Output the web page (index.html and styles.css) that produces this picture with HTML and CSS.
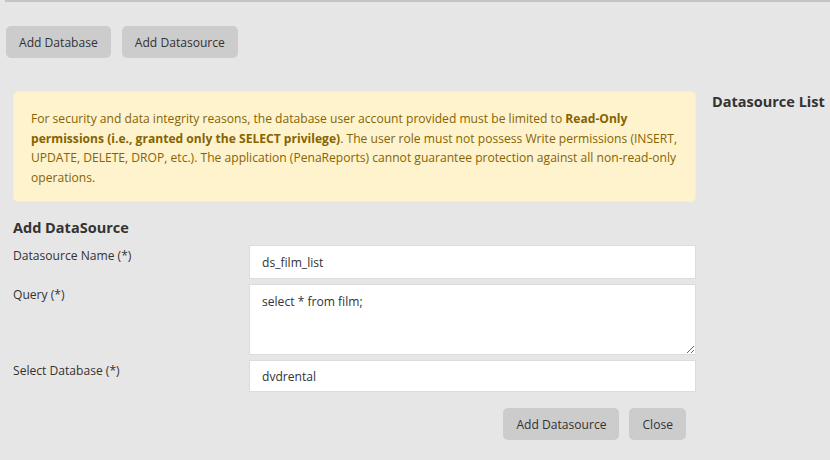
FILE: index.html
```html
<!DOCTYPE html>
<html>
<head>
<meta charset="utf-8">
<link rel="stylesheet" href="styles.css">
</head>
<body>
<div class="topbar"></div>
<div class="toolbar">
  <button class="btn">Add Database</button>
  <button class="btn">Add Datasource</button>
</div>
<div class="main">
  <div class="left">
    <div class="alert">For security and data integrity reasons, the database user account provided must be limited to <b>Read-Only permissions (i.e., granted only the SELECT privilege)</b>. The user role must not possess Write permissions (INSERT, UPDATE, DELETE, DROP, etc.). The application (PenaReports) cannot guarantee protection against all non-read-only operations.</div>
    <h3 class="title">Add DataSource</h3>
    <div class="form">
      <label class="lbl">Datasource Name (*)</label>
      <input class="field" type="text" value="ds_film_list">
      <label class="lbl">Query (*)</label>
      <textarea class="field area">select * from film;</textarea>
      <label class="lbl">Select Database (*)</label>
      <input class="field short" type="text" value="dvdrental">
    </div>
    <div class="actions">
      <button class="btn">Add Datasource</button>
      <button class="btn">Close</button>
    </div>
  </div>
  <div class="right">
    <h3 class="list-title">Datasource List</h3>
  </div>
</div>
</body>
</html>
```
FILE: styles.css
```css
* { box-sizing: border-box; }
html, body { margin: 0; padding: 0; }
body {
  background: #e6e6e6;
  font-family: "Open Sans", "Noto Sans", sans-serif;
  font-size: 12.1px;
  color: #333;
  width: 830px;
  height: 460px;
  overflow: hidden;
}
.topbar {
  height: 2px;
  margin-left: 5px;
  background: #c4c4c4;
}
.toolbar {
  display: flex;
  gap: 11px;
  padding: 24px 0 0 6px;
}
.btn {
  font-family: inherit;
  font-size: 12.1px;
  color: #333;
  background: #cccccc;
  border: none;
  border-radius: 5px;
  height: 32px;
  padding: 0 13px;
  cursor: pointer;
}
.main {
  display: flex;
  margin-top: 33px;
}
.left {
  width: 696px;
  padding-left: 13px;
}
.right {
  padding-left: 16px;
}
.alert {
  background: #fff3cd;
  border: 1px solid #ffeeba;
  border-radius: 5px;
  color: #856404;
  padding: 17px 17px 14px 17px;
  line-height: 19.6px;
}
.alert b { font-weight: 700; }
.title {
  margin: 16px 0 8px;
  font-size: 14.5px;
  font-weight: 700;
  color: #333;
}
.list-title {
  margin: 1px 0 0;
  font-size: 14.5px;
  font-weight: 700;
  color: #333;
}
.form {
  display: grid;
  grid-template-columns: 236px 1fr;
  row-gap: 5px;
}
.lbl {
  padding-top: 2px;
  line-height: 18px;
}
.field {
  font-family: inherit;
  font-size: 12.1px;
  color: #333;
  background: #fff;
  border: 1px solid #dcdcdc;
  height: 34px;
  padding: 0 12px;
  width: 100%;
  margin: 0;
}
.field.short { height: 32px; }
.area {
  height: 71px;
  padding: 8px 12px;
  resize: vertical;
  display: block;
}
.actions {
  display: flex;
  justify-content: flex-end;
  gap: 10px;
  padding: 16px 10px 0 0;
}
```
